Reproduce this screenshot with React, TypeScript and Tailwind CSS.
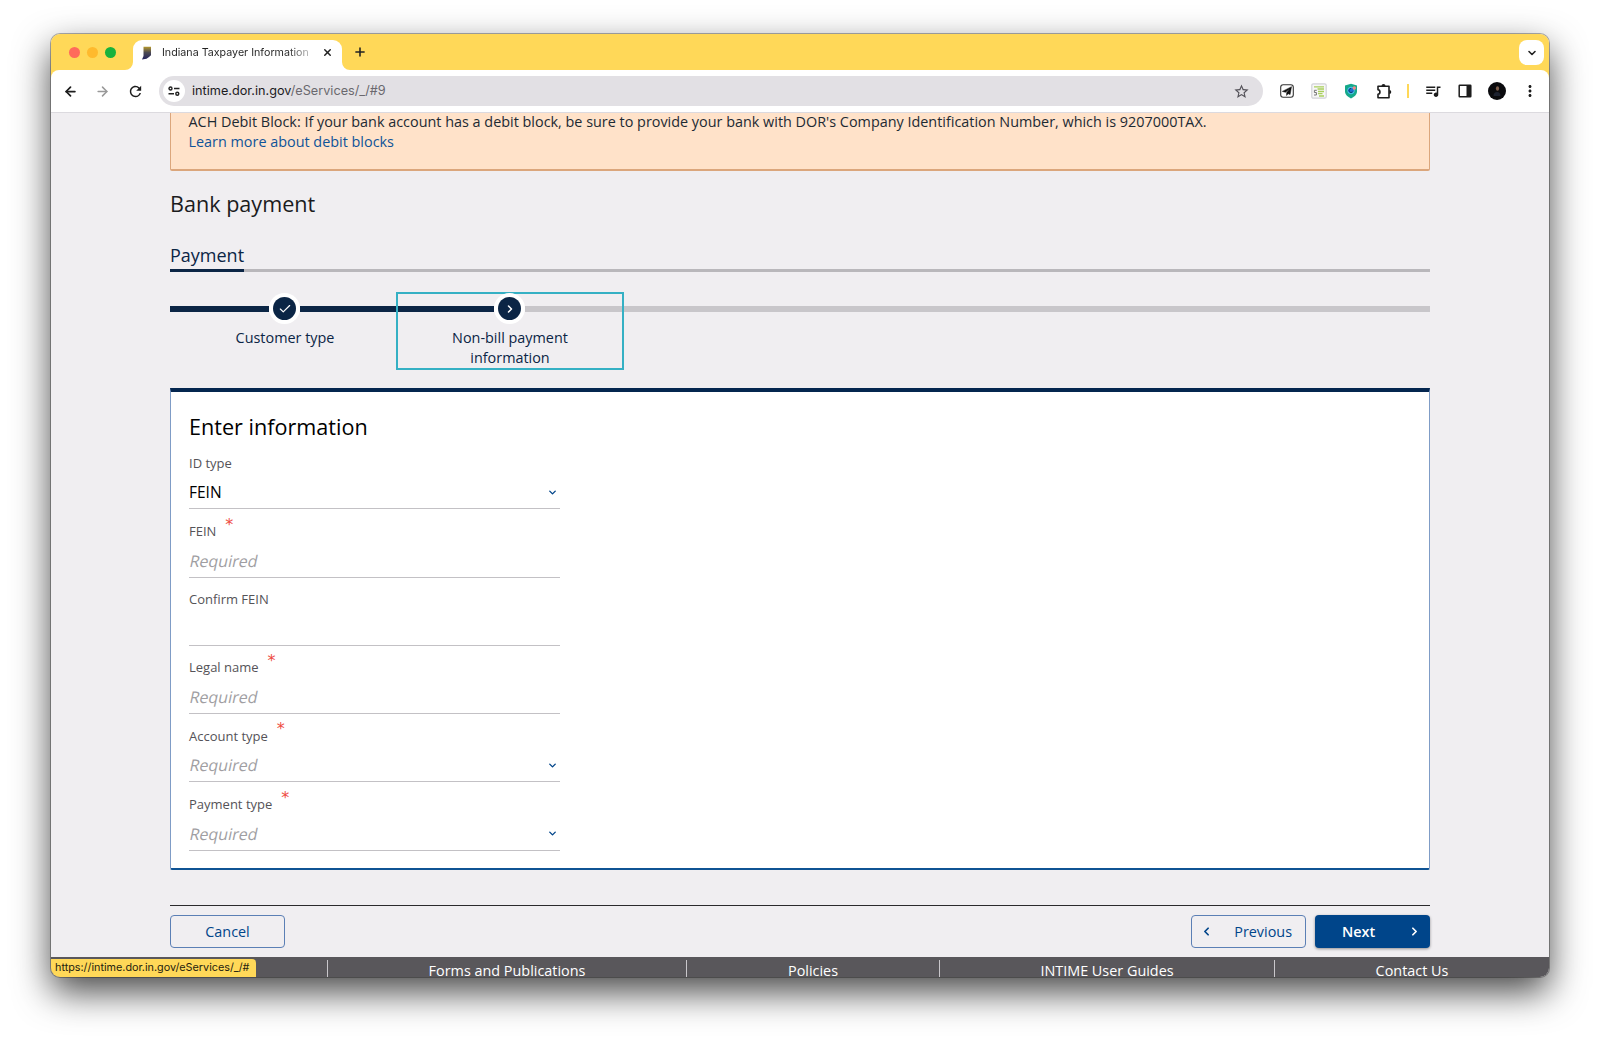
import React from 'react';
import { ArrowLeft, ArrowRight, Check, ChevronDown, ChevronLeft, ChevronRight, Plus, X } from 'lucide-react';
import { MdQueueMusic, MdRefresh, MdStarBorder, MdMoreVert } from 'react-icons/md';

type Field = {
    label: string;
    value?: string;
    required?: boolean;
    select?: boolean;
};

const fields: Field[] = [
    { label: 'ID type', value: 'FEIN', select: true },
    { label: 'FEIN', required: true },
    { label: 'Confirm FEIN' },
    { label: 'Legal name', required: true },
    { label: 'Account type', required: true, select: true },
    { label: 'Payment type', required: true, select: true },
];

const TabStrip: React.FC = () => (
    <div className="flex h-9 shrink-0 items-end bg-[#ffd858] pr-[5px]">
        <div className="flex h-9 w-[74px] items-center gap-[7px] pl-[18px]">
            <span className="size-[11px] shrink-0 rounded-full bg-[#ff6b5b]" />
            <span className="size-[11px] shrink-0 rounded-full bg-[#ffba2d]" />
            <span className="size-[11px] shrink-0 rounded-full bg-[#19b23c]" />
        </div>
        <svg width="8" height="8" viewBox="0 0 8 8" className="shrink-0">
            <path d="M8 0v8H0a8 8 0 0 0 8-8z" fill="#fff" />
        </svg>
        <div className="flex h-[30px] w-[209px] items-center rounded-t-[9px] bg-white pb-[5px] pl-2">
            <svg width="11" height="14" viewBox="0 0 11 14" className="shrink-0">
                <defs>
                    <linearGradient id="indiana" x1="0" y1="0" x2="0" y2="1">
                        <stop offset="0" stopColor="#b5982f" />
                        <stop offset="0.45" stopColor="#4d4b52" />
                        <stop offset="1" stopColor="#22215f" />
                    </linearGradient>
                </defs>
                <path d="M2.500 .8h7.500v8.500l-2 1.700-2.500 1.800-4.500.6 1.500-3.400z" fill="url(#indiana)" />
            </svg>
            <span className="mt-px ml-[10px] w-[147px] whitespace-nowrap bg-linear-to-r from-[#222] from-85% to-[#bbb] bg-clip-text font-[Inter,sans-serif] text-[10.7px] text-transparent">
                Indiana Taxpayer Information
            </span>
            <X size={11} strokeWidth={3.2} className="ml-[13px] shrink-0 text-[#222]" />
        </div>
        <svg width="8" height="8" viewBox="0 0 8 8" className="shrink-0">
            <path d="M0 0v8h8a8 8 0 0 1-8-8z" fill="#fff" />
        </svg>
        <div className="flex h-9 flex-1 items-center pl-[3px]">
            <Plus size={14} strokeWidth={2.7} className="text-[#222]" />
        </div>
        <div className="mb-[5px] flex size-[25px] items-center justify-center rounded-lg bg-white">
            <ChevronDown size={12} strokeWidth={3.2} className="text-[#222]" />
        </div>
    </div>
);

const Toolbar: React.FC = () => (
    <div className="flex h-[43px] shrink-0 bg-[#ffd858]">
        <div className="flex flex-1 items-center rounded-t-lg border-b border-[#dcdadf] bg-white pr-[9px] pl-3">
            <ArrowLeft size={15} strokeWidth={2.8} className="text-[#1d1d1d]" />
            <ArrowRight size={15} strokeWidth={2.4} className="ml-[17px] text-[#999]" />
            <MdRefresh size={17} className="ml-[17px] text-[#1d1d1d]" />
            <div className="ml-[15px] flex h-[30px] w-[1104px] items-center rounded-full bg-[#e2e0e4] pr-[13px] pl-1">
                <div className="flex size-[22px] items-center justify-center rounded-full bg-white">
                    <svg width="12" height="10" viewBox="0 0 12 10" fill="none" stroke="#222" strokeWidth="1.4">
                        <circle cx="2.500" cy="2.500" r="1.500" />
                        <path d="M6 2.500h5.500M.5 7.800H6" />
                        <circle cx="9.300" cy="7.800" r="1.500" />
                    </svg>
                </div>
                <span className="ml-[7px] flex-1 font-[Inter,sans-serif] text-[12.7px] text-[#6a686e]">
                    <span className="text-[#1c1b1e]">intime.dor.in.gov</span>/eServices/_/#9
                </span>
                <MdStarBorder size={17} className="text-[#55535a]" />
            </div>
            <svg width="14" height="14" viewBox="0 0 14 14" className="ml-[17px]">
                <rect x=".7" y=".7" width="12.600" height="12.600" rx="2.500" fill="none" stroke="#333" strokeWidth="1.100" />
                <path d="M11.500 2.700L2.300 7.400l3.200.9L9.600 5 6.600 8.700v2.800l1.500-1.800 2 .9z" fill="#111" stroke="#111" strokeWidth=".5" />
            </svg>
            <svg width="16" height="16" viewBox="0 0 16 16" className="ml-[17px]">
                <rect x=".8" y=".8" width="14.400" height="14.400" rx="1.500" fill="#f7f7f7" stroke="#d2d2d8" strokeWidth="1.200" />
                <path d="M3 3.800h10M6.500 6h6.500M7 8.500h6M7 10.700h4.500M8 13h5" stroke="#a9cf5c" strokeWidth="1.300" />
                <path d="M5.800 7.300H3.400v2.200h2v2.500H3" fill="none" stroke="#777" strokeWidth="1" />
            </svg>
            <svg width="14" height="16" viewBox="0 0 14 16" className="ml-[17px]">
                <path d="M7 .8l6 1.600v5.800c0 3.400-2.500 5.500-6 7.200-3.500-1.700-6-3.800-6-7.200V2.400z" fill="#16a98a" />
                <circle cx="7" cy="7.500" r="3.300" fill="#1f6fd0" stroke="#4fc8e8" strokeWidth="1" />
                <path d="M7 5.500a2 2 0 1 0 1.800 3" fill="none" stroke="#0d3a66" strokeWidth="1" />
                <circle cx="10.300" cy="5" r="1.700" fill="#f08a8a" />
            </svg>
            <svg width="17" height="17" viewBox="0 0 17 17" className="ml-[18px]">
                <path
                    d="M2 3.300h11v11.400H2v-3.500c2.600-.2 2.600-4.200 0-4.400z"
                    fill="none"
                    stroke="#1d1d1d"
                    strokeWidth="1.600"
                    strokeLinejoin="round"
                />
                <path d="M5.500 3a2 2 0 0 1 4 0zM13.300 7a2 2 0 0 1 0 4z" fill="#1d1d1d" />
            </svg>
            <span className="ml-[14px] h-[14px] w-[2px] bg-[#ffd858]" />
            <MdQueueMusic size={18} className="ml-[15px] text-[#1d1d1d]" />
            <svg width="14" height="14" viewBox="0 0 14 14" className="ml-[16px]">
                <rect x="1.200" y="1.200" width="11.600" height="11.600" rx="0.500" fill="none" stroke="#1d1d1d" strokeWidth="1.500" />
                <path d="M8.500 1h4.500v12H8.500z" fill="#1d1d1d" />
            </svg>
            <svg width="18" height="18" viewBox="0 0 18 18" className="ml-[16px]">
                <circle cx="9" cy="9" r="9" fill="#0b0b0e" />
                <path d="M5.500 14c0-3 1.500-4 3.500-4s3.500 1 3.500 4z" fill="#1d2230" />
                <ellipse cx="9.500" cy="6.500" rx="1.600" ry="2.300" fill="#80604e" />
            </svg>
            <MdMoreVert size={18} className="ml-[15px] text-[#1d1d1d]" />
        </div>
    </div>
);

const Steps: React.FC = () => (
    <div className="mt-[20px] grid h-[78px] grid-cols-[226px_228px_1fr]">
        <div className="flex flex-col items-center">
            <div className="flex h-[33px] w-full items-center">
                <span className="h-[6px] w-[99px] bg-[#0b2545]" />
                <span className="flex size-[31px] items-center justify-center rounded-full bg-white">
                    <span className="flex size-[23px] items-center justify-center rounded-full bg-[#0b2545]">
                        <Check size={14} strokeWidth={2} className="text-white" />
                    </span>
                </span>
                <span className="h-[6px] flex-1 bg-[#0b2545]" />
            </div>
            <span className="mt-[3px] pl-1 text-[14.4px] leading-5 text-[#0b2545]">Customer type</span>
        </div>
        <div className="flex flex-col items-center border-2 border-[#35b0c4]">
            <div className="-mt-[2px] flex h-[33px] w-[224px] items-center">
                <span className="h-[6px] w-[96px] bg-[#0b2545]" />
                <span className="flex size-[31px] items-center justify-center rounded-full bg-white">
                    <span className="flex size-[23px] items-center justify-center rounded-full bg-[#0b2545]">
                        <ChevronRight size={12} strokeWidth={3} className="text-white" />
                    </span>
                </span>
                <span className="h-[6px] flex-1 bg-[#c8c6ca]" />
            </div>
            <span className="mt-[3px] w-[140px] text-center text-[14.4px] leading-5 text-[#0b2545]">
                Non-bill payment information
            </span>
        </div>
        <div className="flex h-[33px] items-center">
            <span className="h-[6px] flex-1 bg-[#c8c6ca]" />
        </div>
    </div>
);

const FormField: React.FC<{ field: Field }> = ({ field }) => (
    <div className="flex h-[68.3px] w-[371px] flex-col justify-end">
        <div className="flex h-5 items-center text-[13px] text-[#555358]">
            {field.label}
            {field.required && (
                <span className="mb-[14px] ml-[9px] font-['DejaVu_Sans',sans-serif] text-[16px] leading-5 text-[#ee4b42]">
                    *
                </span>
            )}
        </div>
        <div className="mt-[3px] flex h-[33px] items-center justify-between border-b-[1.5px] border-[#c3c1c5] pr-[2px]">
            {field.value ? (
                <span className="text-[15.5px] text-black">{field.value}</span>
            ) : (
                <span className="ml-px -skew-x-12 text-[16px] text-[#a09ea2]">
                    {field.label === 'Confirm FEIN' ? '' : 'Required'}
                </span>
            )}
            {field.select && <ChevronDown size={11} strokeWidth={3} className="text-[#00458a]" />}
        </div>
    </div>
);

const Footer: React.FC = () => (
    <div className="flex h-[20px] shrink-0 items-end bg-[#59575b] text-[14.4px] leading-[21px] font-medium text-white">
        <div className="w-[276px] shrink-0" />
        <div className="flex h-[17px] w-[359px] items-start justify-center border-l-[1.5px] border-[#c9c7cb]">
            Forms and Publications
        </div>
        <div className="flex h-[17px] w-[253px] items-start justify-center border-l-[1.5px] border-[#c9c7cb]">
            Policies
        </div>
        <div className="flex h-[17px] w-[335px] items-start justify-center border-l-[1.5px] border-[#c9c7cb]">
            INTIME User Guides
        </div>
        <div className="flex h-[17px] flex-1 items-start justify-center border-l-[1.5px] border-[#c9c7cb]">
            Contact Us
        </div>
    </div>
);

const App: React.FC = () => {
    return (
        <div className="h-[1044px] w-[1600px] overflow-hidden bg-white pt-[34px] pl-[51px] font-['Open_Sans',sans-serif]">
            <div className="relative flex h-[943px] w-[1498px] flex-col overflow-hidden rounded-[9px] bg-[#f0eef1] shadow-[0_0_0_1px_rgba(0,0,0,0.3),0_15px_36px_rgba(0,0,0,0.72)]">
                <TabStrip />
                <Toolbar />
                <div className="flex h-[844px] flex-col px-[119px]">
                    <div className="h-[58px] rounded-b-[2px] border-x-[1.5px] border-b-2 border-[#dba67c] bg-[#ffe2c9] px-[17.5px] text-[14.4px] leading-[20.4px] text-[#1d2a33]">
                        <div className="-mt-[1px]">
                            ACH Debit Block: If your bank account has a debit block, be sure to provide your bank with DOR's
                            Company Identification Number, which is 9207000TAX.
                        </div>
                        <div className="text-[#0f5499]">Learn more about debit blocks</div>
                    </div>
                    <h1 className="mt-[17px] text-[21.6px] leading-8 text-[#1b1b1d]">Bank payment</h1>
                    <div className="mt-[17px] flex h-[35px] border-b-[3px] border-[#b9b7bb]">
                        <span className="h-[35px] border-b-[3px] border-[#0b2545] pt-[4px] text-[18px] leading-7 text-[#0b2545]">
                            Payment
                        </span>
                    </div>
                    <Steps />
                    <div className="mt-[18px] h-[482px] rounded-b-[2px] border border-t-4 border-b-2 border-[#7f9cc6] border-t-[#04264f] border-b-[#0f5394] bg-white px-[18px]">
                        <h2 className="mt-[19px] h-8 text-[21.6px] leading-8 text-black">Enter information</h2>
                        <div className="-mt-[2px]">
                            {fields.map((field) => (
                                <FormField key={field.label} field={field} />
                            ))}
                        </div>
                    </div>
                    <div className="mt-[35px] flex justify-between border-t-[1.5px] border-[#2a292c] pt-[9px] text-[14.4px] font-medium">
                        <button className="h-[33px] w-[115px] rounded-[4px] border border-[#5b7fb5] text-[#00458a]">
                            Cancel
                        </button>
                        <div className="flex gap-[9px]">
                            <button className="flex h-[33px] w-[115px] items-center justify-between rounded-[4px] border border-[#5b7fb5] pr-[13px] pl-[8px] text-[#00458a]">
                                <ChevronLeft size={13} strokeWidth={3.2} />
                                Previous
                            </button>
                            <button className="flex h-[33px] w-[115px] items-center justify-between rounded-[4px] bg-[#00458a] pr-[9px] pl-[27px] font-semibold text-white shadow-[0_1px_3px_rgba(0,0,0,0.4)]">
                                Next
                                <ChevronRight size={13} strokeWidth={3.2} />
                            </button>
                        </div>
                    </div>
                </div>
                <Footer />
                {/* link target shown while hovering */}
                <div className="absolute bottom-0 left-0 flex h-[18px] w-[205px] items-center rounded-tr-[4px] bg-[#ffd858] pt-px pl-1 font-[Inter,sans-serif] text-[10.8px] text-[#26220f]">
                    https://intime.dor.in.gov/eServices/_/#
                </div>
            </div>
        </div>
    );
};

export default App;
